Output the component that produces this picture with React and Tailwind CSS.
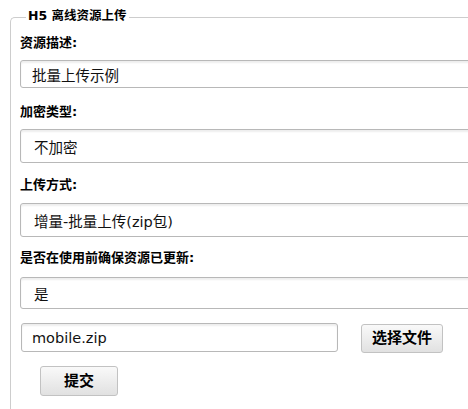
import React from 'react';

const font = "font-['DejaVu_Sans','Noto_Sans_CJK_SC',sans-serif]";

function Label({children, className}) {
    return (
        <div className={"text-[13px] leading-[18px] font-bold text-black " + className}>
            {children}
        </div>
    );
}

function Field({value, className, pad}) {
    return (
        <input
            readOnly
            value={value}
            className={"block w-[520px] border border-[#b8b8b8] rounded-[3px] bg-white text-[14.5px] text-[#111] outline-none shadow-[inset_0_2px_2px_rgba(0,0,0,0.07)] " + pad + " " + className}
        />
    );
}

export default function App() {
    return (
        <div className={"w-[468px] h-[409px] overflow-hidden bg-white " + font}>
            <div className="relative ml-[10px] mt-[17px] w-[620px] h-[400px] border-l border-t border-[#cdcdcd] rounded-tl-[5px] pl-[9px]">
                <span className="absolute left-[15px] -top-[11px] bg-white px-[2px] text-[12.5px] leading-[18px] font-bold text-black">
                    H5 离线资源上传
                </span>

                <Label className="pt-[16px]">资源描述:</Label>
                <Field value="批量上传示例" className="mt-[8px] h-[28px]" pad="pl-[11px]"/>

                <Label className="mt-[15px]">加密类型:</Label>
                <Field value="不加密" className="mt-[8px] h-[34px]" pad="pl-[13px]"/>

                <Label className="mt-[13px]">上传方式:</Label>
                <Field value="增量-批量上传(zip包)" className="mt-[9px] h-[34px]" pad="pl-[13px]"/>

                <Label className="mt-[12px]">是否在使用前确保资源已更新:</Label>
                <Field value="是" className="mt-[10px] h-[32px]" pad="pl-[13px]"/>

                <div className="mt-[14px] flex items-start">
                    <input
                        readOnly
                        value="mobile.zip"
                        className="ml-[1px] block w-[317px] h-[29px] border border-[#b8b8b8] rounded-[3px] bg-white pl-[10px] text-[14.5px] text-[#111] outline-none shadow-[inset_0_2px_2px_rgba(0,0,0,0.07)]"
                    />
                    <button className="ml-[23px] mt-[1px] w-[82px] h-[29px] border border-[#c2c2c2] rounded-[3px] bg-gradient-to-b from-[#f9f9f9] to-[#e1e1e1] text-[15px] font-bold text-black">
                        选择文件
                    </button>
                </div>

                <button className="ml-[20px] mt-[13px] block w-[78px] h-[30px] border border-[#c2c2c2] rounded-[3px] bg-gradient-to-b from-[#f9f9f9] to-[#e1e1e1] text-[15px] font-bold text-black">
                    提交
                </button>
            </div>
        </div>
    );
}
